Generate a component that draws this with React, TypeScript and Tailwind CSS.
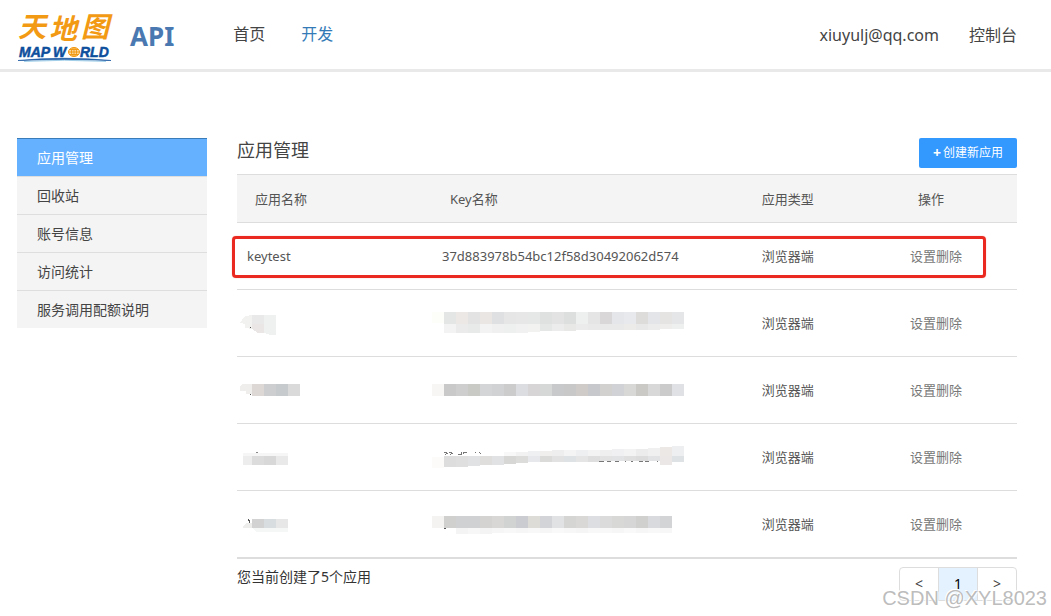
import React, { useState } from "react";

interface Cell {
    color: string;
    x: number;
    top: number;
    bottom: number;
}

interface AppRow {
    name?: string;
    apiKey?: string;
    type: string;
    maskedName?: React.ReactNode;
    maskedKey?: Cell[];
    highlighted?: boolean;
}

const menuItems = ["应用管理", "回收站", "账号信息", "访问统计", "服务调用配额说明"];

// One strip of the mosaic, 12px wide tiles side by side
const strip = (colors: string[], x: number, top: number[], bottom: number[]): Cell[] =>
    colors.map((color, i) => ({
        color,
        x: x + i * 12,
        top: top[Math.min(i, top.length - 1)],
        bottom: bottom[Math.min(i, bottom.length - 1)],
    }));

const keyMaskA: Cell[] = [
    ...strip(["#fdfdfa"], 0, [5], [16]),
    ...strip(
        ["#e4e6e5", "#ebe8e6", "#e3e3e3", "#e9e6e4", "#dee0e2", "#e6e6e6", "#e7e7e7", "#e5e8e7", "#dfe0e0", "#e3e3e3", "#dddfde", "#eef0ef", "#e4e5e4", "#d9d7d8", "#e4e6e9", "#e7e9ec", "#dddcda", "#e3e5e9", "#e6e4e2", "#e4e6e7"],
        12, [5], [17]
    ),
    ...strip(
        ["#f3f3f3", "#ebebeb", "#e8eae9", "#f3f3f3", "#f0f0f0", "#eeefef", "#f1f1f1", "#f2f2f0", "#e5e7e6", "#ececec", "#e8e8e6", "#ebebeb", "#e9e9e9", "#e9e9e9", "#e9e9e9", "#ecebe9", "#e8e8e8", "#ececec", "#efedec", "#eeefef"],
        12, [17], [26, 26, 26, 26, 26, 26, 26, 25, 24, 24, 24, 23, 23, 23, 23, 23, 23, 23, 22, 22]
    ),
];

const keyMaskB: Cell[] = [
    ...strip(["#f8f6f4"], 0, [10], [22]),
    ...strip(
        ["#c9c9c9", "#cecece", "#c9cac6", "#d4d5d7", "#d1d2d4", "#cccccc", "#dcdde0", "#d8d5d6", "#d5d8d6", "#c8c9cb", "#c8c8c8", "#cecbc8", "#c6c8cb", "#d3d1cf", "#d1d2d5", "#d8d8d6", "#cac9c6", "#d8d8d8", "#cbcbcb", "#e0e1e4"],
        12, [10], [22]
    ),
];

const keyMaskC: Cell[] = [
    ...strip(["#fdfbfa"], 0, [16], [27]),
    ...strip(
        ["#f8f8f8", "#f2f2f2", "#eff0f2", "#f0efee", "#eeeeee", "#f4f4f4", "#edeff1", "#f3f3f3", "#efefef", "#f0f0f2", "#f3f3f3", "#ececec", "#f0f0f0", "#ebe8e6", "#eeeff0"],
        72, [11, 11, 10, 10, 9, 9, 9, 9, 9, 8, 8, 8, 7, 6, 5], [15]
    ),
    ...strip(
        ["#dddddd", "#dfdfdf", "#e1e2e3", "#dfdedd", "#e1e2e3", "#d7d7d6", "#dcdcda", "#e6e8eb", "#dbdbd9", "#e2e2e2", "#dfe2e5", "#e5e5e5", "#dedede", "#e2e2e2", "#e1e3e5", "#dfdfdf", "#dcdcdc", "#e2e3e5", "#ebe7e6", "#dfe2e5"],
        12, [15], [26, 26, 25, 24, 24, 23, 22, 21, 21, 21, 21, 21, 21, 20, 20, 20, 20, 20, 24, 21]
    ),
];

const keyMaskD: Cell[] = [
    ...strip(["#f5f3f2"], 0, [8], [20]),
    ...strip(
        ["#d0d0ce", "#cfd1d2", "#cfd1d3", "#d5d3d2", "#d9d7d5", "#d0d3d2", "#cbccd1", "#dddcd7", "#d3d4d7", "#e1e2e4", "#d5d5d3", "#dad8d6", "#dcdee1", "#dbdbdb", "#d8d8d6", "#d6d6d6", "#d0d0ce", "#d9dadd", "#d2d4d6"],
        12, [8], [20]
    ),
    ...strip(
        ["#f4f4f4", "#f7f7f7", "#f4f4f4", "#f6f6f6", "#f8f8f8", "#f6f6f6", "#f8f8f8", "#f6f6f6", "#f9f9f9", "#f7f7f7", "#f5f5f5", "#f8f8f8", "#f8f8f8", "#f6f6f6", "#f9f9f9", "#f6f6f6", "#f8f8f8", "#f7f7f7"],
        24, [20], [26, 26, 26, 25]
    ),
];

// Scraps of text that stick out from under the third key's mosaic
const scrapsC = [
    [12, 11, 3], [17, 11, 3], [14, 12, 2], [19, 12, 2], [13, 13, 1], [18, 13, 1],
    [29, 11, 1], [29, 12, 1], [31, 11, 4], [31, 12, 1], [26, 13, 4],
    [43, 11, 1], [47, 11, 1], [48, 12, 1],
    [167, 20, 5], [175, 20, 4], [183, 20, 4], [193, 20, 1], [199, 20, 2], [207, 20, 4], [213, 20, 4], [225, 20, 1],
];

const apps: AppRow[] = [
    { name: "keytest", apiKey: "37d883978b54bc12f58d30492062d574", type: "浏览器端", highlighted: true },
    {
        type: "浏览器端",
        maskedKey: keyMaskA,
        maskedName: (
            <>
                <path d="M3 16L8 9L15 8V22L8 21V17Z" fill="#f2f2f1" />
                <path d="M15 8H27V17H15Z" fill="#e9e9e9" />
                <path d="M15 17H27V26H21L15 22Z" fill="#eae6e6" />
                <path d="M27 8H39V28H33L27 26Z" fill="#eff1f1" />
                <path d="M13 20h1v1h-1z" fill="#555" />
            </>
        ),
    },
    {
        type: "浏览器端",
        maskedKey: keyMaskB,
        maskedName: (
            <>
                <path d="M3 12L5 10H15V20H9V17H3Z" fill="#efeeed" />
                <path d="M15 10H27V22H15Z" fill="#ddd8d5" />
                <path d="M27 10H39V22H27Z" fill="#cdced0" />
                <path d="M39 10H51V22H39Z" fill="#c6cacd" />
                <path d="M51 10H63V22H51Z" fill="#dadada" />
                <path d="M13 20h1v1h-1z" fill="#555" />
            </>
        ),
    },
    {
        type: "浏览器端",
        maskedKey: keyMaskC,
        maskedName: (
            <>
                <path d="M6 12H51V15H6Z" fill="#f6f6f6" />
                <path d="M6 15H15V24H6Z" fill="#ededed" />
                <path d="M15 15H27V24H15Z" fill="#dcdcdc" />
                <path d="M27 15H39V24H27Z" fill="#d8d8d8" />
                <path d="M39 15H51V24H39Z" fill="#e9e9e9" />
                <path d="M19 11h2v1h-2z" fill="#888" />
            </>
        ),
    },
    {
        type: "浏览器端",
        maskedKey: keyMaskD,
        maskedName: (
            <>
                <path d="M6 18L10 15H15V20H6Z" fill="#ededec" />
                <path d="M15 11H27V20H15Z" fill="#d2d2d2" />
                <path d="M27 11H39V20H27Z" fill="#d8dde0" />
                <path d="M39 11H51V20H39Z" fill="#e7e7e7" />
                <path d="M15 20H51V24H19Z" fill="#f5f6f6" />
                <path d="M11 11h1v1h1v3h-1v-2h-1z" fill="#555" />
            </>
        ),
    },
];

const Logo: React.FC = () => (
    <svg width="100" height="64" viewBox="0 0 100 64" role="img" aria-label="天地图 MAP WORLD">
        <g fill="#f39a14" fontFamily="'Noto Sans CJK SC', sans-serif" fontWeight="700" fontSize="28" fontStyle="italic">
            <text x="0" y="37">天</text>
            <text x="31" y="39">地</text>
            <text x="63" y="37">图</text>
        </g>
        <g fill="#0d4f9c" stroke="#0d4f9c" strokeWidth="0.5" fontFamily="'Liberation Sans', sans-serif" fontWeight="700" fontSize="14" fontStyle="italic">
            <text x="1" y="57">MAP</text>
            <text x="35" y="57">W</text>
            <text x="62" y="57">RLD</text>
        </g>
        <g fill="none" stroke="#f39a14" strokeWidth="1">
            <ellipse cx="56" cy="52" rx="5.5" ry="4.5" fill="#fbdca6" />
            <ellipse cx="56" cy="52" rx="2.5" ry="4.5" />
            <path d="M50.5 52H61.5M51.5 49.5H60.5M51.5 54.5H60.5M56 47.5V56.5" />
        </g>
        <path d="M0 60.500Q46 56 93 60.500Q46 58.500 0 60.500Z" fill="#0d4f9c" stroke="#0d4f9c" strokeWidth="0.6" />
        <path d="M6 61.500Q46 59 88 61.500" fill="none" stroke="#8fc6e6" strokeWidth="0.8" />
    </svg>
);

const KeyMask: React.FC<{ cells: Cell[] }> = ({ cells }) => (
    <svg className="block" width="254" height="32" viewBox="0 0 254 32" shapeRendering="crispEdges" aria-hidden="true">
        {cells.map((cell, i) => (
            <rect key={i} x={cell.x} y={cell.top} width="12" height={cell.bottom - cell.top} fill={cell.color} />
        ))}
        {cells === keyMaskC && scrapsC.map(([x, y, w], i) => (
            <rect key={i} x={x} y={y} width={w} height="1" fill="#777" />
        ))}
        {cells === keyMaskD && <rect x="12" y="20" width="2" height="1" fill="#555" />}
    </svg>
);

const Header: React.FC = () => (
    <header className="flex h-[72px] items-start border-b-3 border-[#e9e9e9] pr-[34px] pl-[18px] text-base">
        <a href="#"><Logo /></a>
        <span className="ml-3 pt-[17px] text-[26px] leading-[38px] font-bold text-[#4a78b1]">API</span>
        <nav className="ml-[59px] flex gap-9 pt-[22px] leading-6">
            <a href="#" className="text-[#444]">首页</a>
            <a href="#" className="text-[#337ab7]">开发</a>
        </nav>
        <div className="ml-auto flex gap-[30px] pt-[23px] leading-6 text-[#444]">
            <a href="#">xiuyulj@qq.com</a>
            <a href="#">控制台</a>
        </div>
    </header>
);

const Sidebar: React.FC<{ active: string; onSelect: (item: string) => void }> = ({ active, onSelect }) => (
    <ul className="w-[190px] shrink-0 text-sm">
        {menuItems.map((item) => (
            <li key={item}>
                <button
                    className={`h-[38px] w-full cursor-pointer border-t px-5 text-left ${item === active ? "border-[#3a7cb8] bg-[#66b1ff] text-white" : "border-[#dedede] bg-[#f4f4f4] text-[#444]"}`}
                    onClick={() => onSelect(item)}
                >
                    {item}
                </button>
            </li>
        ))}
    </ul>
);

const AppTable: React.FC = () => (
    <table className="mt-1.5 w-full table-fixed border-b border-separate border-spacing-0 border-[#dddddd] text-left text-[13px] text-[#555]">
        <thead>
            <tr className="h-[49px] bg-[#f4f4f4]">
                <th className="w-[25%] border-y border-[#dddddd] pt-0.5 pl-[18px] font-normal">应用名称</th>
                <th className="w-[41%] border-y border-[#dddddd] pt-0.5 pl-[18px] font-normal">Key名称</th>
                <th className="w-[19%] border-y border-[#dddddd] pt-0.5 pl-2.5 font-normal">应用类型</th>
                <th className="w-[15%] border-y border-[#dddddd] pt-0.5 pl-[18px] font-normal">操作</th>
            </tr>
        </thead>
        <tbody>
            {apps.map((app, index) => (
                <tr key={index} className="relative h-[67px]">
                    <td className="border-b border-[#dddddd]">
                        {app.highlighted && (
                            <div className="pointer-events-none absolute top-[13px] right-[31px] bottom-3 -left-[5px] rounded-[4px] border-3 border-[#ea2a20] shadow-[0_0_1px_#f5857f]"></div>
                        )}
                        {app.name ? (
                            <p className="pt-0.5 pl-2.5">{app.name}</p>
                        ) : (
                            <svg className="block" width="72" height="32" viewBox="0 0 72 32" shapeRendering="crispEdges" aria-hidden="true">
                                {app.maskedName}
                            </svg>
                        )}
                    </td>
                    <td className="border-b border-[#dddddd]">
                        {app.apiKey && <p className="pt-0.5 pl-2.5">{app.apiKey}</p>}
                        {app.maskedKey && <KeyMask cells={app.maskedKey} />}
                    </td>
                    <td className="border-b border-[#dddddd] pt-0.5 pl-2.5">{app.type}</td>
                    <td className="border-b border-[#dddddd] pt-0.5 pl-2.5 text-[#777]">
                        <button className="cursor-pointer">设置</button>
                        <button className="cursor-pointer">删除</button>
                    </td>
                </tr>
            ))}
        </tbody>
    </table>
);

const App: React.FC = () => {
    const [active, setActive] = useState<string>("应用管理");

    return (
        <div className="relative min-h-screen bg-white font-['Noto_Sans','Noto_Sans_CJK_SC',sans-serif]">
            <Header />
            <div className="flex gap-[30px] pt-[66px] pr-[34px] pl-[17px]">
                <Sidebar active={active} onSelect={setActive} />
                <main className="min-w-0 flex-1">
                    <div className="flex items-start justify-between">
                        <h1 className="text-lg leading-6 text-[#444]">应用管理</h1>
                        <button className="flex h-[30px] w-[98px] cursor-pointer items-center justify-center gap-0.5 rounded-[2px] bg-[#3399ff] text-xs text-white">
                            <span className="text-sm font-bold">+</span>创建新应用
                        </button>
                    </div>
                    <AppTable />
                    <div className="flex items-start justify-between pt-2">
                        <p className="text-sm text-[#333]">您当前创建了5个应用</p>
                        <nav className="flex h-[34px] w-[118px] divide-x divide-[#dddddd] overflow-hidden rounded-[4px] border border-[#dddddd] text-sm text-[#444]">
                            <button className="flex-1 cursor-pointer">&lt;</button>
                            <button className="flex-1 cursor-pointer bg-[#e4f1ff] text-black">1</button>
                            <button className="flex-1 cursor-pointer">&gt;</button>
                        </nav>
                    </div>
                </main>
            </div>
            <div className="pointer-events-none absolute right-1 bottom-1.5 font-['Liberation_Sans',sans-serif] text-xl leading-6 text-[#b4b4b4]/90 [text-shadow:1px_1px_1px_#fff,-1px_-1px_0_#ffffff]">CSDN @XYL8023</div>
        </div>
    );
};

export default App;
